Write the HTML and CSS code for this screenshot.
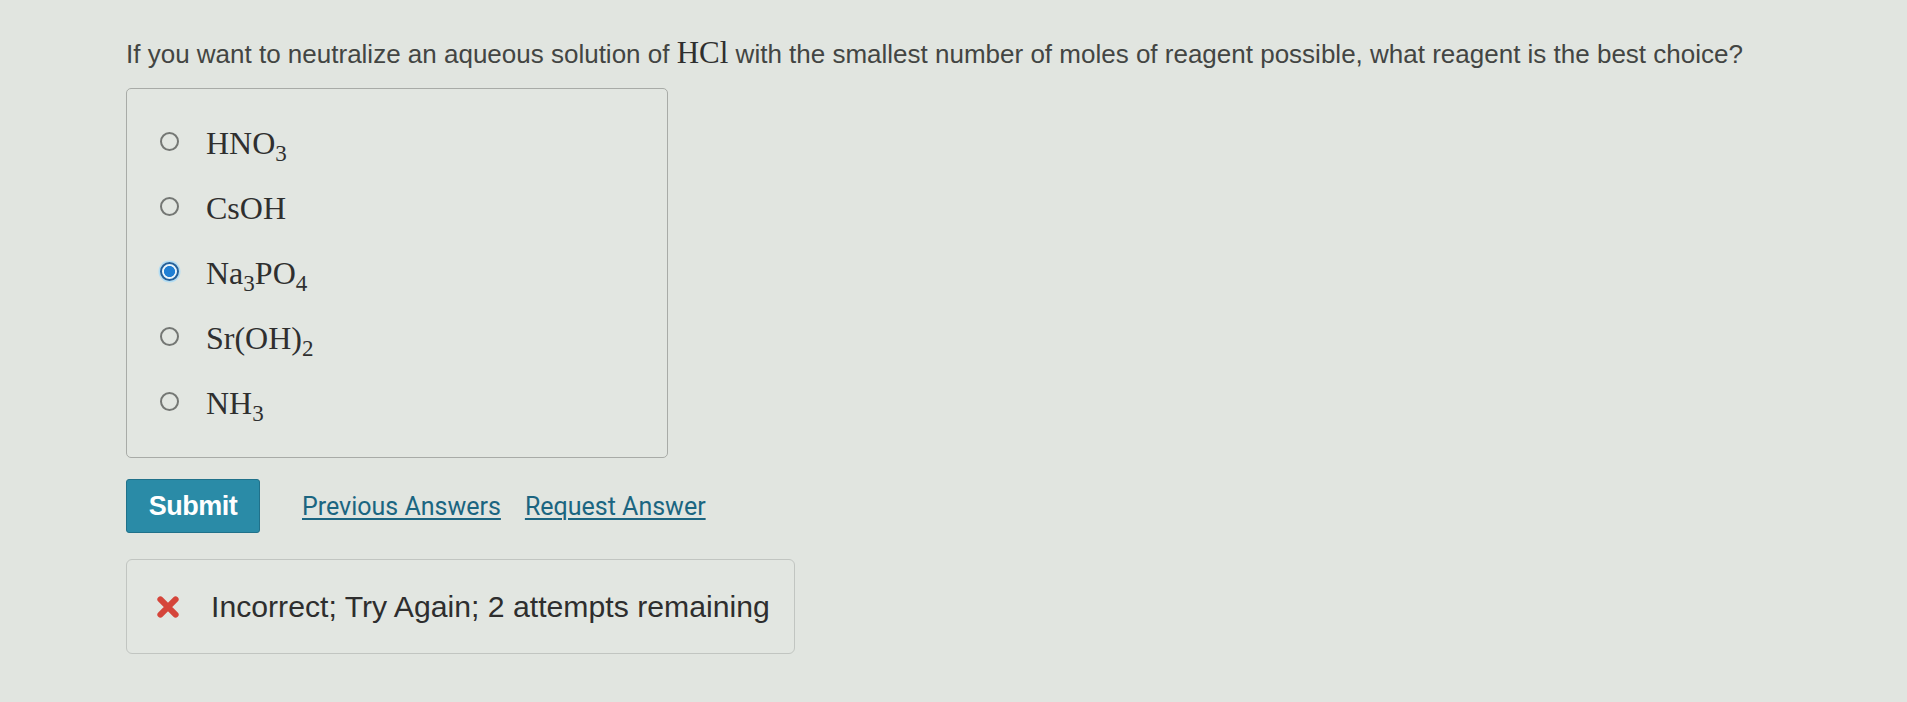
FILE: index.html
```html
<!DOCTYPE html>
<html lang="en">
<head>
<meta charset="utf-8">
<title>Question</title>
<link rel="stylesheet" href="styles.css">
</head>
<body>
<div class="page">
  <p class="question">If you want to neutralize an aqueous solution of <span class="math">HCl</span> with the smallest number of moles of reagent possible, what reagent is the best choice?</p>

  <div class="options">
    <div class="option">
      <span class="radio"></span>
      <span class="label">HNO<span class="sub">3</span></span>
    </div>
    <div class="option">
      <span class="radio"></span>
      <span class="label">CsOH</span>
    </div>
    <div class="option">
      <span class="radio radio-checked"></span>
      <span class="label">Na<span class="sub">3</span>PO<span class="sub">4</span></span>
    </div>
    <div class="option">
      <span class="radio"></span>
      <span class="label">Sr(OH)<span class="sub">2</span></span>
    </div>
    <div class="option">
      <span class="radio"></span>
      <span class="label">NH<span class="sub">3</span></span>
    </div>
  </div>

  <div class="actions">
    <button class="submit" type="button">Submit</button>
    <a class="link link-first" href="#">Previous Answers</a>
    <a class="link" href="#">Request Answer</a>
  </div>

  <div class="feedback">
    <svg class="x-icon" width="26" height="26" viewBox="0 0 24 24" aria-hidden="true">
      <path d="M5 5 L19 19 M19 5 L5 19" stroke="#d5453a" stroke-width="5.6" stroke-linecap="round" fill="none"/>
    </svg>
    <span class="feedback-text">Incorrect; Try Again; 2 attempts remaining</span>
  </div>
</div>
</body>
</html>
```

FILE: styles.css
```css
html, body {
  margin: 0;
  padding: 0;
}

body {
  background: #e1e5e0;
  font-family: "Liberation Sans", Arial, sans-serif;
  color: #3a3a3a;
  width: 1907px;
  height: 702px;
  overflow: hidden;
}

.page {
  padding: 39px 0 0 126px;
}

.question {
  margin: 0;
  font-size: 26px;
  line-height: 30px;
  color: #434543;
  white-space: nowrap;
}

.math {
  font-family: "Liberation Serif", "Times New Roman", serif;
  font-size: 31px;
  line-height: 20px;
  color: #2f2f2f;
}

.options {
  box-sizing: border-box;
  margin-top: 19px;
  width: 542px;
  height: 370px;
  border: 1px solid #a8aba7;
  border-radius: 5px;
  background: #e2e6e1;
  padding: 20px 0 0 33px;
}

.option {
  display: flex;
  align-items: center;
  height: 65px;
}

.radio {
  box-sizing: border-box;
  width: 19px;
  height: 19px;
  border-radius: 50%;
  border: 2px solid #747774;
  flex: none;
}

.radio-checked {
  border: 2px solid #23609a;
  background: radial-gradient(circle, #1f7fd4 0 5.2px, #eaf5fb 5.9px);
  box-shadow: 0 0 0 1.5px #b3ddf3;
}

.label {
  margin-left: 27px;
  padding-top: 4px;
  font-family: "Liberation Serif", "Times New Roman", serif;
  font-size: 32px;
  color: #2f2f2f;
}

.sub {
  font-size: 0.72em;
  vertical-align: -0.3em;
  line-height: 0;
}

.actions {
  display: flex;
  align-items: center;
  margin-top: 21px;
}

.submit {
  box-sizing: border-box;
  width: 134px;
  height: 54px;
  background: #2a8ba7;
  border: 1px solid #20718a;
  border-radius: 3px;
  color: #ffffff;
  font-family: "Liberation Sans", Arial, sans-serif;
  font-weight: bold;
  font-size: 27px;
  letter-spacing: -0.5px;
  padding: 0;
}

.link {
  font-family: Roboto, "Liberation Sans", sans-serif;
  font-size: 25px;
  color: #1b6581;
  text-decoration: underline;
  text-decoration-thickness: 1.5px;
  text-underline-offset: 3px;
  margin-left: 24px;
}

.link-first {
  margin-left: 42px;
}

.feedback {
  box-sizing: border-box;
  display: flex;
  align-items: center;
  margin-top: 26px;
  width: 669px;
  height: 95px;
  border: 1px solid #c1c5c1;
  border-radius: 6px;
  background: #e2e6e1;
  padding-left: 28px;
}

.x-icon {
  flex: none;
  display: block;
}

.feedback-text {
  margin-left: 30px;
  font-size: 30.2px;
  color: #2e2e2e;
}
```
